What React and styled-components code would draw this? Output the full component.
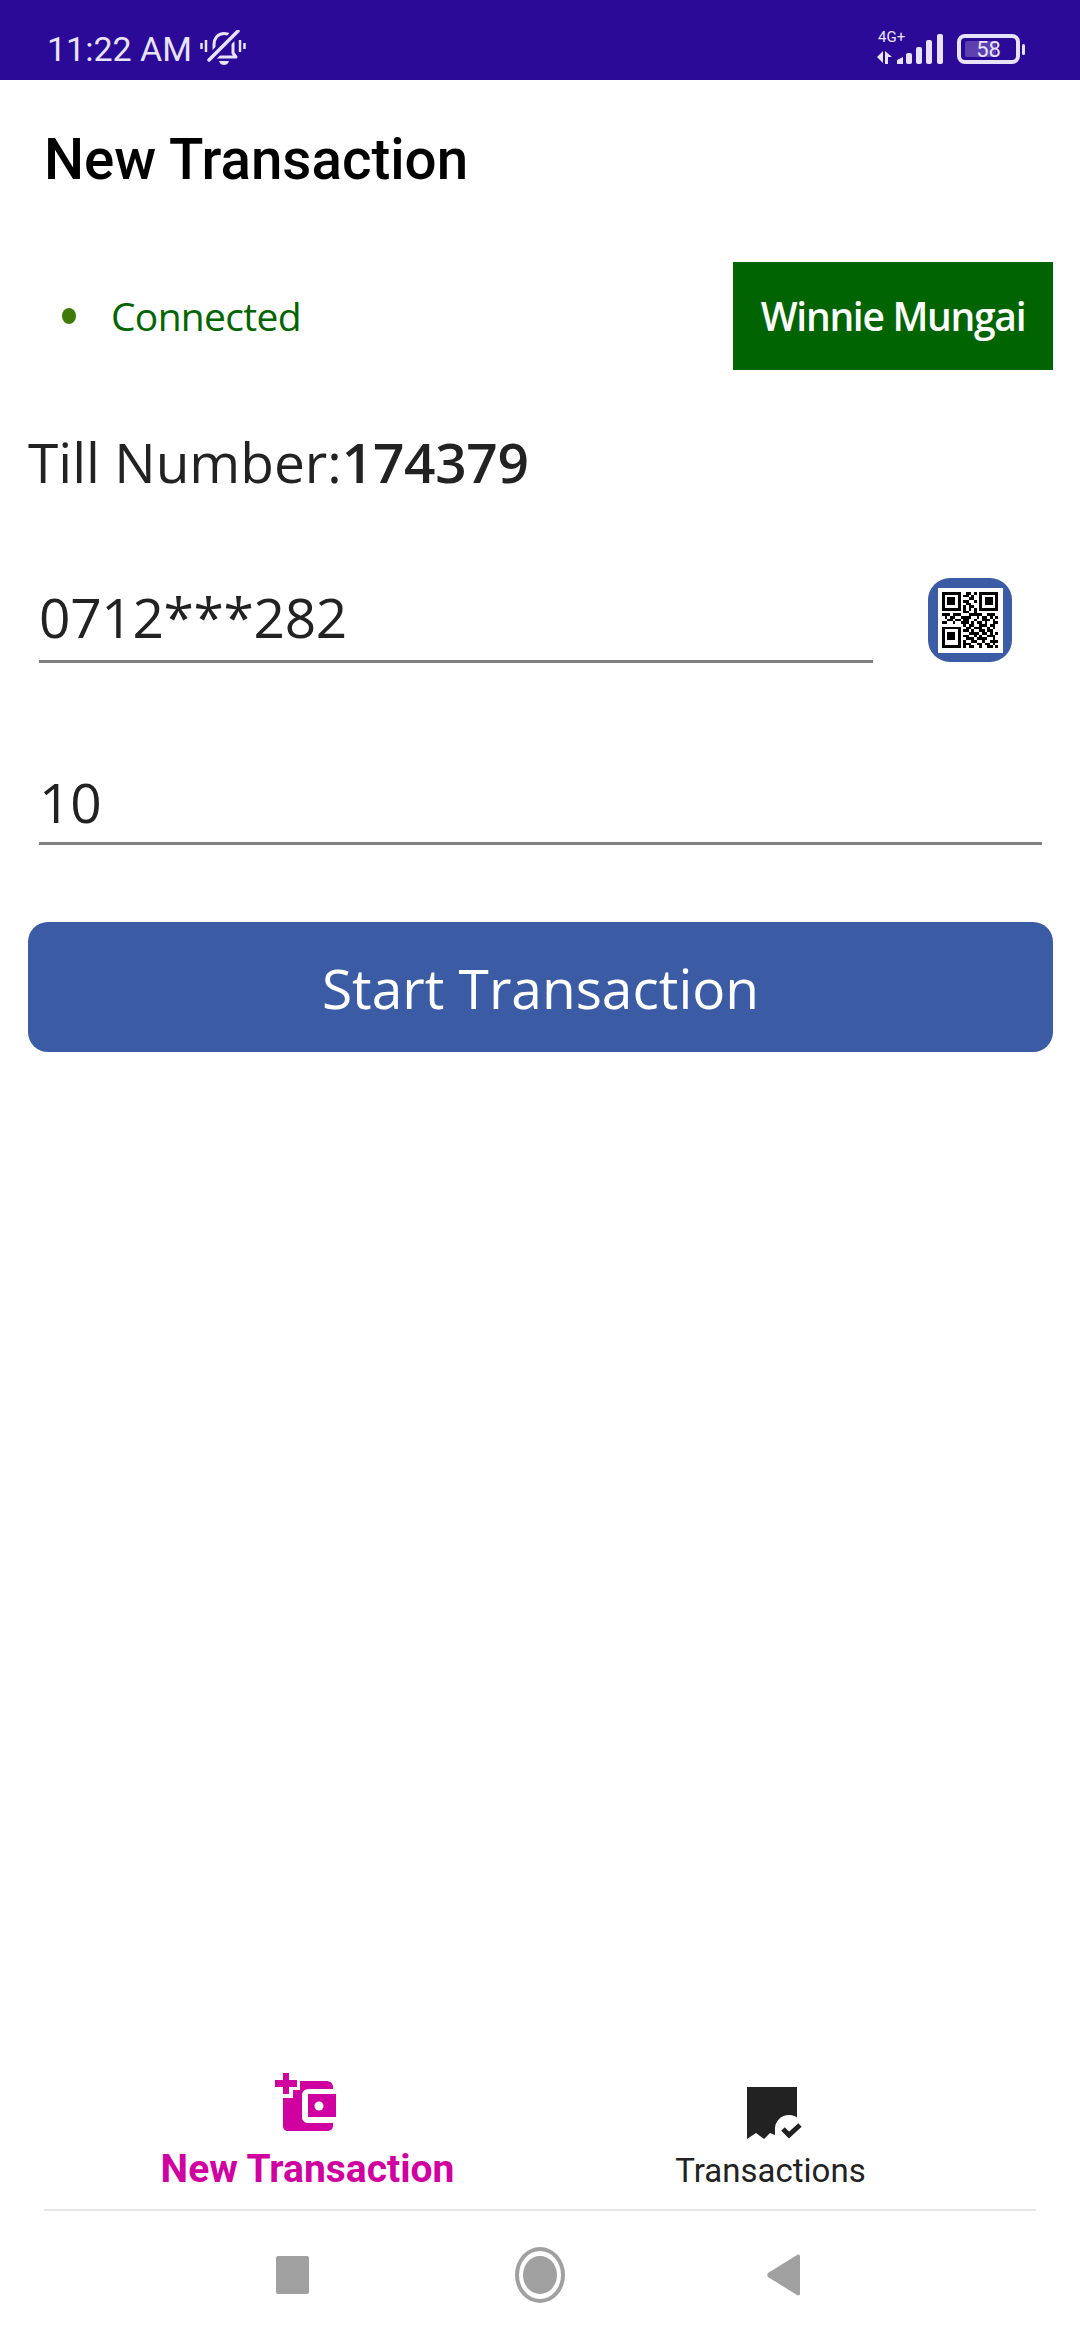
import React from "react";
import styled, { createGlobalStyle } from "styled-components";

const GlobalStyle = createGlobalStyle`
  html, body {
    margin: 0;
    padding: 0;
    background: #fff;
  }
  * {
    box-sizing: border-box;
  }
`;

const QR_ROWS = [
  "111111100110101111111",
  "100000101101001000001",
  "101110100011001011101",
  "101110101100101011101",
  "101110100110001011101",
  "100000101011001000001",
  "111111101010101111111",
  "000000001100100000000",
  "111011100011111001110",
  "010110011110010110101",
  "001101101100100111010",
  "110010011101011010011",
  "000000001011001110110",
  "111111100110111001010",
  "100000101101001101100",
  "101110100011110110101",
  "101110101100101001110",
  "101110100111011110010",
  "100000101001100100111",
  "100000101110011011010",
  "111111101011001001101",
];

const MutedBell = () => (
  <svg width="46" height="38" viewBox="0 0 46 38" fill="none" stroke="#e8e3fb">
    <path d="M14 23V15C14 8 18 3.500 24 3.500C30 3.500 33 8 33 13V23L36 27H11Z" strokeWidth="3" strokeLinejoin="round" />
    <path d="M9 30L38 1" stroke="#2a0a96" strokeWidth="9" />
    <path d="M9 30L38 1" strokeWidth="3.500" strokeLinecap="round" />
    <path d="M1.500 13V19M6 10V22M40 10V22M44.500 13V19" strokeWidth="2.500" />
    <path d="M19 31H29C28 34 26 35 24 35C22 35 20 34 19 31Z" fill="#e8e3fb" stroke="none" />
  </svg>
);

const SignalBars = () => (
  <svg width="68" height="32" viewBox="0 0 68 32" fill="#e8e3fb">
    <path d="M0 24L6 18V30ZM8 18L8 31H11V24H15Z" />
    <path d="M20 31V27L26 24V31Z" />
    <rect x="29" y="20" width="6" height="11" rx="2" />
    <rect x="39" y="14" width="6" height="17" rx="2" />
    <rect x="49" y="7" width="6" height="24" rx="2" />
    <rect x="60" y="1" width="6" height="30" rx="2" />
  </svg>
);

const QrCode = () => (
  <svg width="56" height="56" viewBox="0 0 21 21" shapeRendering="crispEdges">
    {QR_ROWS.map((row, y) =>
      row.split("").map((cell, x) =>
        cell === "1" ? <rect key={`${x}-${y}`} x={x} y={y} width="1" height="1" fill="#000" /> : null
      )
    )}
  </svg>
);

const WalletAddIcon = () => (
  <svg width="62" height="58" viewBox="0 0 62 58">
    <path d="M8 25H18V17H25V8H51C55 8 58 10 58 14V16H34C29 16 27 19 27 23V44C27 48 30 50 34 50H58V53C58 56 55 58 52 58H13C10 58 8 56 8 53Z" fill="#d000a0" />
    <path d="M33 21H61V44H33Z" fill="#d000a0" />
    <circle cx="44" cy="33" r="4.500" fill="#fff" />
    <path d="M8 0H14V7H22V14H14V21H8V14H0V7H8Z" fill="#d000a0" />
  </svg>
);

const ReceiptCheckIcon = () => (
  <svg width="56" height="54" viewBox="0 0 56 54">
    <path d="M0 0H50V40H28V48L23 46L17 52L9 46L0 52Z" fill="#222" />
    <circle cx="42" cy="42" r="14" fill="#fff" />
    <path d="M36 42L42 48L53 38" fill="none" stroke="#222" strokeWidth="5" />
  </svg>
);

const App = () => {
  return (
    <>
      <GlobalStyle />
      <Screen>
        <StatusBar>
          <StatusGroup>
            <Clock>11:22 AM</Clock>
            <MutedBell />
          </StatusGroup>
          <StatusGroup>
            <Network>
              <NetworkLabel>4G+</NetworkLabel>
              <SignalBars />
            </Network>
            <Battery>
              <BatteryBody>
                <BatteryFill />
                <BatteryText>58</BatteryText>
              </BatteryBody>
              <BatteryCap />
            </Battery>
          </StatusGroup>
        </StatusBar>

        <Header>New Transaction</Header>

        <ConnectionRow>
          <Connection>
            <Dot />
            <ConnectionText>Connected</ConnectionText>
          </Connection>
          <UserBadge>Winnie Mungai</UserBadge>
        </ConnectionRow>

        <TillLine>
          Till Number:<TillValue>174379</TillValue>
        </TillLine>

        <PhoneRow>
          <Field $height="83px">0712***282</Field>
          <QrButton>
            <QrPaper>
              <QrCode />
            </QrPaper>
          </QrButton>
        </PhoneRow>

        <AmountRow>
          <Field $height="80px">10</Field>
        </AmountRow>

        <StartButton>Start Transaction</StartButton>

        <Spacer />

        <TabBar>
          <Tab>
            <TabIcon $shift="-4px">
              <WalletAddIcon />
            </TabIcon>
            <TabLabel $active>New Transaction</TabLabel>
          </Tab>
          <Tab>
            <TabIcon $shift="8px">
              <ReceiptCheckIcon />
            </TabIcon>
            <TabLabel>Transactions</TabLabel>
          </Tab>
        </TabBar>

        <NavBar>
          <NavSquare />
          <NavCircle>
            <NavCircleInner />
          </NavCircle>
          <svg width="34" height="44" viewBox="0 0 34 44">
            <path d="M31 2L2 20C1 21 1 23 2 24L31 42C32 43 34 42 34 41V3C34 2 32 1 31 2Z" fill="#a0a0a0" />
          </svg>
        </NavBar>
      </Screen>
    </>
  );
};

const Screen = styled.div`
  width: 1080px;
  height: 2340px;
  display: flex;
  flex-direction: column;
  background: #fff;
  overflow: hidden;
  font-family: "Open Sans", sans-serif;
  color: #222;
`;

const StatusBar = styled.div`
  height: 80px;
  flex-shrink: 0;
  background: #2a0a96;
  display: flex;
  align-items: center;
  justify-content: space-between;
  padding: 18px 55px 0 47px;
`;

const StatusGroup = styled.div`
  display: flex;
  align-items: center;
  gap: 8px;
`;

const Clock = styled.span`
  font-family: Roboto, sans-serif;
  font-size: 34px;
  color: #e8e3fb;
`;

const Network = styled.div`
  position: relative;
  width: 68px;
  height: 32px;
  margin-right: 4px;
`;

const NetworkLabel = styled.span`
  position: absolute;
  left: 1px;
  top: -5px;
  font-family: Roboto, sans-serif;
  font-size: 15px;
  color: #e8e3fb;
`;

const Battery = styled.div`
  display: flex;
  align-items: center;
  gap: 2px;
`;

const BatteryBody = styled.div`
  position: relative;
  width: 63px;
  height: 30px;
  border: 4px solid #e8e3fb;
  border-radius: 8px;
  display: flex;
  align-items: center;
  justify-content: center;
`;

const BatteryFill = styled.div`
  position: absolute;
  left: 4px;
  top: 3px;
  bottom: 3px;
  width: 31px;
  background: #5d3fb0;
  border-radius: 2px;
`;

const BatteryText = styled.span`
  position: relative;
  font-family: Roboto, sans-serif;
  font-size: 22px;
  color: #e8e3fb;
`;

const BatteryCap = styled.div`
  width: 3px;
  height: 11px;
  background: #e8e3fb;
  border-radius: 2px;
`;

const Header = styled.div`
  height: 160px;
  padding-left: 44px;
  display: flex;
  align-items: center;
  font-family: Roboto, sans-serif;
  font-weight: 500;
  font-size: 56.500px;
  color: #000;
`;

const ConnectionRow = styled.div`
  margin-top: 22px;
  padding: 0 27px 0 62px;
  display: flex;
  align-items: center;
  justify-content: space-between;
`;

const Connection = styled.div`
  display: flex;
  align-items: center;
  gap: 35px;
`;

const Dot = styled.div`
  width: 14px;
  height: 16px;
  border-radius: 50%;
  background: #3f7a0a;
`;

const ConnectionText = styled.span`
  padding-bottom: 2px;
  font-size: 39px;
  letter-spacing: -0.7px;
  color: #006400;
`;

const UserBadge = styled.div`
  width: 320px;
  height: 108px;
  padding-bottom: 2px;
  background: #006400;
  color: #fff;
  font-size: 39px;
  font-weight: 600;
  letter-spacing: -1.300px;
  display: flex;
  align-items: center;
  justify-content: center;
`;

const TillLine = styled.div`
  margin-top: 54px;
  padding-left: 28px;
  font-size: 55px;
  line-height: 75px;
`;

const TillValue = styled.span`
  font-weight: 600;
  letter-spacing: -0.3px;
`;

const PhoneRow = styled.div`
  margin-top: 81px;
  padding: 0 68px 0 39px;
  display: flex;
  align-items: flex-start;
  justify-content: space-between;
`;

const AmountRow = styled.div`
  margin-top: 102px;
  padding: 0 38px 0 39px;
  display: flex;
`;

const Field = styled.div`
  flex: 1;
  height: ${(p) => p.$height};
  border-bottom: 3px solid #808080;
  font-size: 55px;
  line-height: 74px;
  letter-spacing: -0.3px;
  color: #222;
`;

const QrButton = styled.div`
  width: 84px;
  height: 84px;
  margin-top: -2px;
  margin-bottom: -1px;
  margin-left: 55px;
  border-radius: 22px;
  background: #3b5ba5;
  display: flex;
  align-items: center;
  justify-content: center;
`;

const QrPaper = styled.div`
  width: 65px;
  height: 65px;
  background: #fff;
  display: flex;
  align-items: center;
  justify-content: center;
`;

const StartButton = styled.div`
  margin: 77px 27px 0 28px;
  height: 130px;
  border-radius: 20px;
  background: #3b5ba5;
  color: #fff;
  font-size: 55px;
  display: flex;
  align-items: center;
  justify-content: center;
`;

const Spacer = styled.div`
  flex: 1;
`;

const TabBar = styled.div`
  margin: 0 44px;
  padding: 0 34px 0 32px;
  height: 140px;
  border-bottom: 2px solid #e6e6e6;
  display: grid;
  grid-template-columns: 1fr 1fr;
`;

const Tab = styled.div`
  display: flex;
  flex-direction: column;
  align-items: center;
  justify-content: flex-end;
  padding-bottom: ${(p) => (p.$active ? "18px" : "16px")};
`;

const TabIcon = styled.div`
  margin-left: ${(p) => p.$shift};
  display: flex;
  align-items: flex-end;
`;

const TabLabel = styled.span`
  margin-top: ${(p) => (p.$active ? "16px" : "8px")};
  margin-bottom: ${(p) => (p.$active ? "2px" : "0")};
  font-family: Roboto, sans-serif;
  font-size: ${(p) => (p.$active ? "39px" : "33px")};
  font-weight: ${(p) => (p.$active ? 700 : 400)};
  color: ${(p) => (p.$active ? "#d000a0" : "#222")};
  line-height: 44px;
  white-space: nowrap;
`;

const NavBar = styled.div`
  height: 129px;
  flex-shrink: 0;
  padding: 0 280px 2px 276px;
  display: flex;
  align-items: center;
  justify-content: space-between;
`;

const NavSquare = styled.div`
  width: 33px;
  height: 38px;
  background: #a0a0a0;
  border-radius: 2px;
`;

const NavCircle = styled.div`
  width: 50px;
  height: 56px;
  margin-left: 5px;
  border: 4px solid #a0a0a0;
  border-radius: 50%;
  display: flex;
  align-items: center;
  justify-content: center;
`;

const NavCircleInner = styled.div`
  width: 34px;
  height: 38px;
  border-radius: 50%;
  background: #a0a0a0;
`;

export default App;
